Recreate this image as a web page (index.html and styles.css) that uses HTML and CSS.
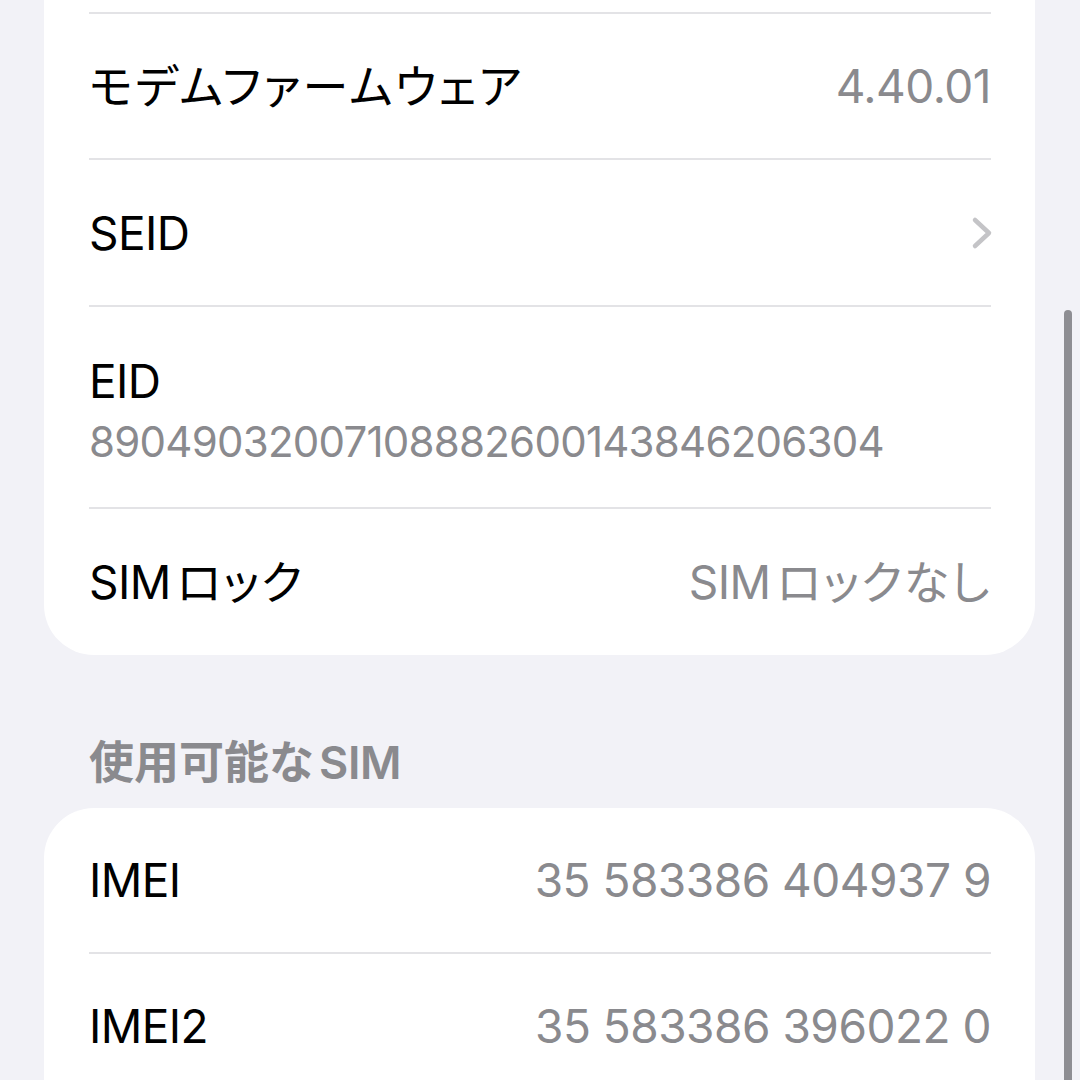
FILE: index.html
```html
<!DOCTYPE html>
<html lang="ja">
<head>
<meta charset="utf-8">
<title>情報</title>
<link rel="stylesheet" href="styles.css">
</head>
<body>
<div class="page">
  <section class="card card-top">
    <div class="row row-a">
      <span class="label"><span class="ja">モデムファームウェア</span></span>
      <span class="value">4.40.01</span>
    </div>
    <div class="row row-b">
      <span class="label">SEID</span>
      <svg class="chev" width="22" height="34" viewBox="0 0 22 34"><polyline points="4,4 18,17 4,30" fill="none" stroke="#c4c4c7" stroke-width="4.5" stroke-linecap="round" stroke-linejoin="round"/></svg>
    </div>
    <div class="row row-eid">
      <span class="label">EID</span>
      <span class="sub">89049032007108882600143846206304</span>
    </div>
    <div class="row row-c">
      <span class="label">SIM<span class="ja after">ロック</span></span>
      <span class="value">SIM<span class="ja after">ロックなし</span></span>
    </div>
  </section>

  <h2 class="section-header"><span class="ja">使用可能な</span><span class="latin-after">SIM</span></h2>

  <section class="card card-bottom">
    <div class="row row-d first">
      <span class="label">IMEI</span>
      <span class="value">35 583386 404937 9</span>
    </div>
    <div class="row row-e">
      <span class="label">IMEI2</span>
      <span class="value">35 583386 396022 0</span>
    </div>
  </section>
</div>
<div class="scrollbar"></div>
</body>
</html>
```

FILE: styles.css
```css
html, body {
  margin: 0;
  padding: 0;
  height: 1080px;
  overflow: hidden;
  background: #f2f2f7;
}

body {
  font-family: Inter, "Noto Sans CJK JP", sans-serif;
  color: #000;
  position: relative;
}

.page {
  display: flex;
  flex-direction: column;
}

.card {
  background: #fff;
  margin: 0 45px 0 44px;
  padding: 0 44px 0 45px;
  border-radius: 50px;
  display: flex;
  flex-direction: column;
}

.card-top {
  margin-top: -60px;
  padding-top: 72px;
}

.card-bottom {
  padding-bottom: 40px;
}

.row {
  box-sizing: border-box;
  display: flex;
  align-items: center;
  justify-content: space-between;
  border-top: 2px solid #e3e3e6;
}

.row.first {
  border-top: none;
}

.row-a { height: 146px; }
.row-b { height: 147px; }
.row-c { height: 148px; }
.row-d { height: 144px; }
.row-e { height: 146px; }

.row-eid {
  height: 202px;
  flex-direction: column;
  align-items: flex-start;
  justify-content: flex-start;
  padding-top: 46px;
  gap: 8px;
}

.label {
  font-size: 46px;
  line-height: 56px;
  letter-spacing: -0.6px;
  white-space: nowrap;
}

.value {
  font-size: 46px;
  line-height: 56px;
  color: #8a8a8e;
  letter-spacing: -0.5px;
  white-space: nowrap;
}

.ja {
  font-feature-settings: "palt";
  letter-spacing: 2.4px;
}

.ja.after {
  margin-left: 6px;
  letter-spacing: 1.6px;
}

.sub {
  font-size: 42px;
  line-height: 50px;
  color: #8a8a8e;
  letter-spacing: -0.75px;
}

.chev {
  display: block;
  margin-right: -2px;
}

.section-header {
  margin: 0;
  box-sizing: border-box;
  height: 153px;
  padding: 80px 0 18px 89px;
  font-size: 45px;
  line-height: 55px;
  font-weight: 600;
  color: #8a8a8e;
  letter-spacing: -0.4px;
}

.section-header .ja {
  letter-spacing: 0;
}

.latin-after {
  margin-left: 6px;
}

.scrollbar {
  position: absolute;
  left: 1064px;
  top: 310px;
  width: 8px;
  height: 800px;
  border-radius: 4px;
  background: #8e8e93;
}
```
